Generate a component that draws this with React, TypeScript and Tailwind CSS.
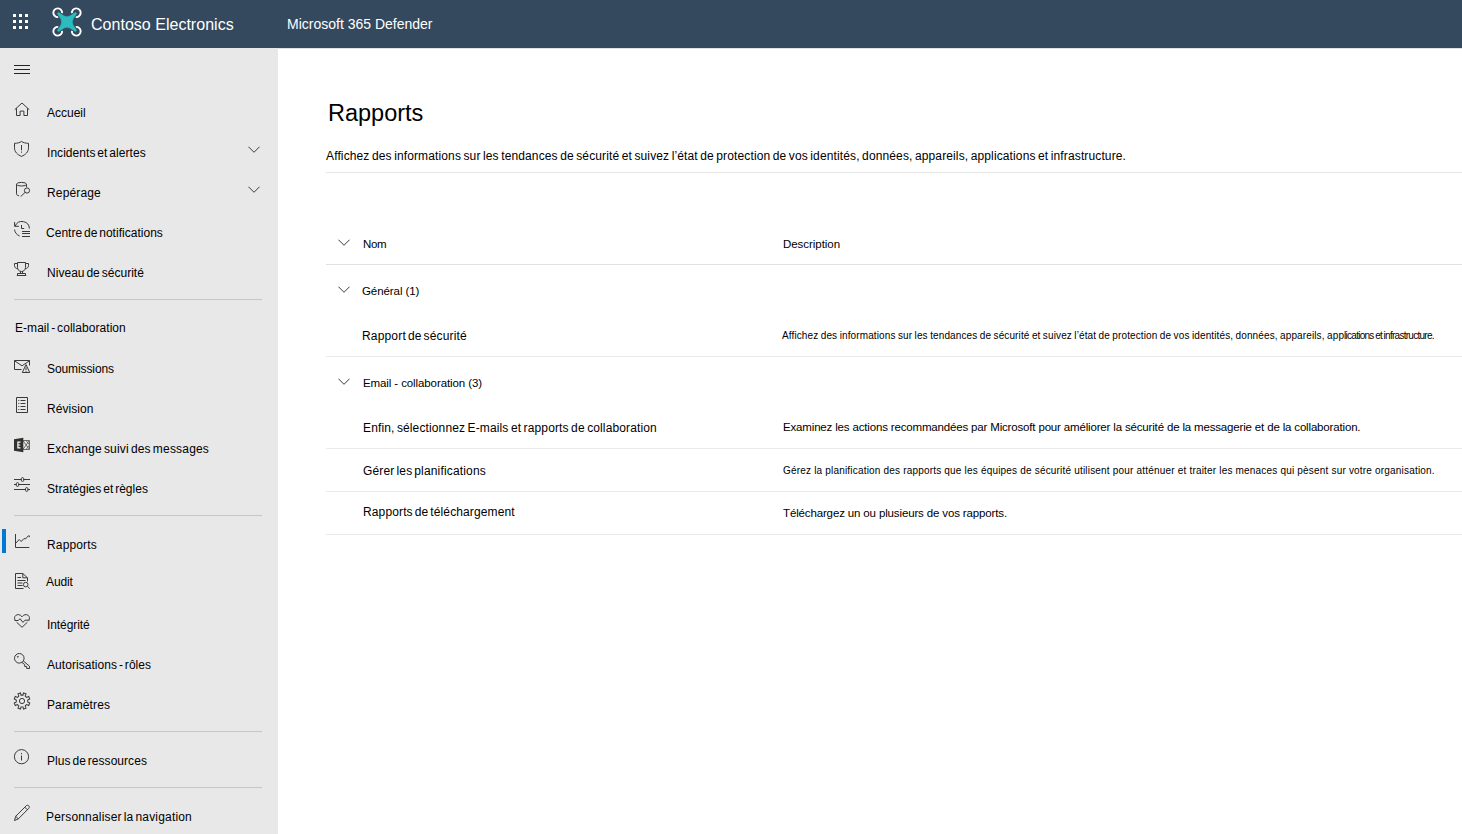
import type { ReactNode } from "react";

type IconProps = { children: ReactNode };

function Icon({ children }: IconProps) {
  return (
    <svg
      className="mt-[10px] h-[18px] w-[18px] shrink-0"
      viewBox="0 0 18 18"
      fill="none"
      stroke="#3b3a39"
      strokeWidth="1"
      aria-hidden="true"
    >
      {children}
    </svg>
  );
}

const icons = {
  home: (
    <Icon>
      <path d="M1.7 9.7 9 3l7.3 6.7M3.5 8.2v7.3h3.6v-4.4h3.8v4.4h3.6V8.2" />
    </Icon>
  ),
  shield: (
    <Icon>
      <path d="M8.5 1.4C6.6 2.8 4.2 3.3 1.5 3.3v4.5c0 4.2 2.9 6.8 7 8.6 4.1-1.8 7-4.4 7-8.6V3.3c-2.7 0-5.1-.5-7-1.9zM8.5 5v5.3M8.5 11.5v1.2" />
    </Icon>
  ),
  hunting: (
    <Icon>
      <ellipse cx="8.5" cy="4.2" rx="5" ry="1.8" />
      <path d="M3.5 4.2v9.6c0 1.2 1 1.7 2.6 2M13.5 4.2v3M12.1 12.4l-4.4 4.1" />
      <circle cx="14" cy="10.5" r="2.6" />
    </Icon>
  ),
  history: (
    <Icon>
      <path d="M1.6 2v4.3h4.3M2.2 6a7.400 7.400 0 0 1 14.200 2.600M8.500 5v3.500h2.700M9 11.500h8M9 13.500h8M9 16.500h8M1.600 9.600c.2 2.800 2 5.200 5 6.400" />
    </Icon>
  ),
  trophy: (
    <Icon>
      <path d="M4.5 2.5h8v5c0 2.2-1.6 4-4 4s-4-1.8-4-4zM4.5 3.5H1.500v2.100c0 1.900 1.500 3 3.300 3M12.500 3.500h3v2.100c0 1.900-1.500 3-3.300 3M7.500 11.400v2M9.500 11.400v2M4.500 15.500v-2h8v2zM3.800 15.500h9.400" />
    </Icon>
  ),
  submissions: (
    <Icon>
      <path d="M8.500 13.500h-7v-9h15v5M1.500 4.800l7.500 5 7.500-5M9.300 16.500h7.400L13 8.600zM13 11.300v2.800M13 14.800v1" />
    </Icon>
  ),
  review: (
    <Icon>
      <path d="M3.500 1.500h11v15h-11zM7.500 4.500h5M7.500 7.500h5M7.500 10.500h5M7.500 13.500h5M5.300 4.500h1M5.300 7.500h1M5.300 10.500h1M5.300 13.500h1" />
    </Icon>
  ),
  exchange: (
    <Icon>
      <path d="M10 4.500h6.500v9H10M10 4.700l6.300 8.600M16.300 4.700 10 13.300M13 4.500l3.500 4.400M13 13.500l3.500-4.400" stroke="#6b6967" />
      <path d="M1 3.300 10.300 1.700v14.600L1 14.700z" fill="#333130" stroke="none" />
      <path d="M7.500 6.200H4.900v5.600h2.600M4.900 9h2.400" stroke="#fff" strokeWidth="1.200" />
    </Icon>
  ),
  policies: (
    <Icon>
      <path d="M1 3.500h7.500M10.500 3.500H17M1 8.500h2.500M5.500 8.500H17M1 13.500h11.500M14.500 13.500H17" />
      <rect x="8.300" y="1.600" width="2.400" height="3.800" rx="1.100" />
      <rect x="3.300" y="6.600" width="2.400" height="3.800" rx="1.100" />
      <rect x="12.500" y="11.600" width="2.400" height="3.800" rx="1.100" />
    </Icon>
  ),
  reports: (
    <Icon>
      <path d="M2.500 2v13.500h13.800M2.700 11.300l3.500-3.800 2 2 2.800-3 1.400.5 3-3.200h.9v1.400" />
    </Icon>
  ),
  audit: (
    <Icon>
      <path d="M10.500 16.500h-8v-15h7.300l4.700 4.300v3.700M9.800 1.500v4.300h4.700M4.500 5.500h3.600M4.500 8.500h8M4.500 11h5M4.500 13.500h5" />
      <circle cx="12.700" cy="12.600" r="2.300" />
      <path d="m14.400 14.300 2.400 2.400" />
    </Icon>
  ),
  health: (
    <Icon>
      <path d="M2.100 8.300C1.200 6.500 1.400 4.500 2.800 3.400c1.900-1.500 4.500-.9 6.200 1.400 1.700-2.300 4.300-2.900 6.200-1.400 1.400 1.100 1.600 3.100.7 4.900M3.600 10.200 9 15.300l5.400-5.100M1.600 8.500h3.700L7 6.700l3 3.700 2-2.200h4.400" />
    </Icon>
  ),
  key: (
    <Icon>
      <circle cx="6.300" cy="6.300" r="4.800" />
      <circle cx="4.800" cy="4.800" r=".5" />
      <path d="m10.300 9 6.200 5.200v2.300h-2.800v-2h-2v-1.900l-3-2.400" />
    </Icon>
  ),
  settings: (
    <Icon>
      <path
        transform="translate(-1.260 -.750) scale(1.140)"
        strokeWidth=".88"
        d="m7.700 1.500.4 1.900h1.800l.4-1.900 2.200.8-.7 1.900 1.200 1.200 1.900-.8.9 2.200-1.800.9v1.700l1.800.9-.9 2.200-1.900-.8-1.200 1.200.7 1.900-2.200.8-.4-1.800H8.100l-.4 1.800-2.200-.8.700-1.900-1.200-1.200-1.900.8-.9-2.200L4 9.400V7.700l-1.800-.9.900-2.200 1.900.8 1.200-1.200-.7-1.900z"
      />
      <circle cx="9" cy="9" r="2.600" />
    </Icon>
  ),
  info: (
    <Icon>
      <circle cx="8.500" cy="8.700" r="7.100" />
      <path d="M8.500 7.500v5M8.500 5v1.200" />
    </Icon>
  ),
  edit: (
    <Icon>
      <path d="M1.500 16.500l1.200-4.200L13.300 1.700c.8-.7 1.800-.6 2.500.1s.7 1.700 0 2.500L5.300 14.900zM2.700 12.300l2.600 2.600M11.800 3.200l2.600 2.600" />
    </Icon>
  ),
};

type NavItem = {
  icon: ReactNode;
  label: string;
  text: string;
  expandable?: boolean;
  active?: boolean;
};

const primary: NavItem[] = [
  { icon: icons.home, label: "Accueil", text: "pt-[15px] pl-4" },
  { icon: icons.shield, label: "Incidents et alertes", text: "pt-[15px] pl-4 tracking-[0.05px] [word-spacing:-1.5px]", expandable: true },
  { icon: icons.hunting, label: "Repérage", text: "pt-[15px] pl-4 tracking-[0.15px]", expandable: true },
  { icon: icons.history, label: "Centre de notifications", text: "pt-[15px] pl-[15px] tracking-[0.02px] [word-spacing:-1.5px]" },
  { icon: icons.trophy, label: "Niveau de sécurité", text: "pt-[15px] pl-4 tracking-[0.03px] [word-spacing:-1.5px]" },
];

const email: NavItem[] = [
  { icon: icons.submissions, label: "Soumissions", text: "pt-[15px] pl-4 tracking-[-0.1px]" },
  { icon: icons.review, label: "Révision", text: "pt-[15px] pl-4 tracking-[0.06px]" },
  { icon: icons.exchange, label: "Exchange suivi des messages", text: "pt-[15px] pl-4 tracking-[0.19px] [word-spacing:-1.5px]" },
  { icon: icons.policies, label: "Stratégies et règles", text: "pt-[15px] pl-4 tracking-[0.03px] [word-spacing:-1.5px]" },
];

const manage: NavItem[] = [
  { icon: icons.reports, label: "Rapports", text: "pt-[15px] pl-4 tracking-[0.15px]", active: true },
  { icon: icons.audit, label: "Audit", text: "pt-3 pl-[15px] tracking-[-0.1px]" },
  { icon: icons.health, label: "Intégrité", text: "pt-[15px] pl-4 tracking-[-0.08px]" },
  { icon: icons.key, label: "Autorisations - rôles", text: "pt-[15px] pl-4 tracking-[0.05px] [word-spacing:-1.5px]" },
  { icon: icons.settings, label: "Paramètres", text: "pt-[15px] pl-4 tracking-[0.1px]" },
];

const resources: NavItem[] = [
  { icon: icons.info, label: "Plus de ressources", text: "pt-[15px] pl-4 tracking-[0.05px] [word-spacing:-1.5px]" },
];

const customize: NavItem[] = [
  { icon: icons.edit, label: "Personnaliser la navigation", text: "pt-[15px] pl-[15px] tracking-[0.18px] [word-spacing:-1.5px]" },
];

function Chevron({ className }: { className: string }) {
  return (
    <svg className={className} viewBox="0 0 12 8" fill="none" stroke="#3b3a39" strokeWidth="1" aria-hidden="true">
      <path d="M.4.700 6 6.300 11.600.700" />
    </svg>
  );
}

function NavGroup({ items }: { items: NavItem[] }) {
  return (
    <ul>
      {items.map((item) => (
        <li key={item.label} className="flex h-10 items-start pr-[18px]">
          <span className={item.active ? "mt-[7px] ml-0.5 mr-[7px] h-6 w-1 bg-[#0078d4]" : "w-[13px]"} />
          {item.icon}
          <span className={`grow leading-4 whitespace-nowrap ${item.text}`}>{item.label}</span>
          {item.expandable && <Chevron className="mt-4 h-2 w-3" />}
        </li>
      ))}
    </ul>
  );
}

function Divider() {
  return <div className="mr-4 ml-3.5 mt-[9px] mb-1.5 h-px shrink-0 bg-[#c8c6c4]" />;
}

function Logo() {
  return (
    <svg className="h-[30px] w-[30px]" viewBox="0 0 30 30" fill="none" aria-hidden="true">
      <g stroke="#fff" strokeWidth="1.900">
        <path d="M6.200 10.100A4.400 4.400 0 1 1 10.100 6.200" />
        <path d="M19.900 6.200A4.400 4.400 0 1 1 23.800 10.100" />
        <path d="M23.800 19.900A4.400 4.400 0 1 1 19.900 23.800" />
        <path d="M10.100 23.800A4.400 4.400 0 1 1 6.200 19.900" />
      </g>
      <path
        d="M5.400 6.600 6.600 5.400 12 9q3 1.500 6 0l5.400-3.600 1.200 1.200L21 12q-1.500 3 0 6l3.600 5.400-1.200 1.200L18 21q-3-1.500-6 0l-5.400 3.600-1.200-1.200L9 18q1.500-3 0-6z"
        fill="#2bbcc0"
        stroke="#2bbcc0"
        strokeWidth=".6"
      />
    </svg>
  );
}

function Waffle() {
  return (
    <div className="grid grid-cols-3 gap-[3px]">
      {[0, 1, 2, 3, 4, 5, 6, 7, 8].map((n) => (
        <span key={n} className="size-[3px] bg-white" />
      ))}
    </div>
  );
}

type Row = {
  name: string;
  nameClass: string;
  rowClass: string;
  description?: ReactNode;
  descriptionClass?: string;
  group?: boolean;
  chevron?: string;
};

const rows: Row[] = [
  {
    name: "Nom",
    nameClass: "pt-[19px] pl-px text-[11.5px] tracking-[-0.4px]",
    rowClass: "h-12 border-b border-[#e1e1e1]",
    description: "Description",
    descriptionClass: "pt-[19px] pl-px text-[11.5px] tracking-[-0.05px]",
    group: true,
    chevron: "mt-[22px]",
  },
  { name: "Général (1)", nameClass: "pt-[18px] text-[11.5px] tracking-[-0.08px]", rowClass: "h-[46px]", group: true, chevron: "mt-[21px]" },
  {
    name: "Rapport de sécurité",
    nameClass: "pt-[17px] text-xs tracking-[0.17px] [word-spacing:-1.5px]",
    rowClass: "h-[46px] border-b border-[#eaeaea]",
    description: (
      <>
        Affichez des informations sur les tendances de sécurité et suivez l’état de protection de vos identités, données, appareils, app
        <span className="tracking-[-0.73px]">lications et infrastructure.</span>
      </>
    ),
    descriptionClass: "pt-[17px] text-[10px] tracking-[0.12px] [word-spacing:-0.5px]",
  },
  { name: "Email - collaboration (3)", nameClass: "pt-[18px] pl-px text-[11.5px] tracking-[-0.1px]", rowClass: "h-[46px]", group: true, chevron: "mt-[21px]" },
  {
    name: "Enfin, sélectionnez E-mails et rapports de collaboration",
    nameClass: "pt-[17px] pl-px text-xs tracking-[0.125px] [word-spacing:-1px]",
    rowClass: "h-[46px] border-b border-[#eaeaea]",
    description:
      "Examinez les actions recommandées par Microsoft pour améliorer la sécurité de la messagerie et de la collaboration.",
    descriptionClass: "pt-4 pl-px text-[11.5px] tracking-[-0.165px]",
  },
  {
    name: "Gérer les planifications",
    nameClass: "pt-[14px] pl-px text-xs tracking-[0.16px] [word-spacing:-1.5px]",
    rowClass: "h-[43px] border-b border-[#eaeaea]",
    description:
      "Gérez la planification des rapports que les équipes de sécurité utilisent pour atténuer et traiter les menaces qui pèsent sur votre organisation.",
    descriptionClass: "pt-[14px] pl-px text-[10px] tracking-[0.19px]",
  },
  {
    name: "Rapports de téléchargement",
    nameClass: "pt-3 pl-px text-xs tracking-[0.13px] [word-spacing:-1.5px]",
    rowClass: "h-[43px] border-b border-[#eaeaea]",
    description: "Téléchargez un ou plusieurs de vos rapports.",
    descriptionClass: "pt-[13px] pl-px text-[11.5px] tracking-[-0.14px]",
  },
];

export default function App() {
  return (
    <div className="flex h-[834px] w-[1462px] flex-col overflow-hidden bg-white font-['Liberation_Sans',Arial,sans-serif] text-xs text-black">
      <header className="flex h-12 shrink-0 items-start bg-[#34495e] text-white">
        <div className="pt-3.5 pl-[13px]">
          <Waffle />
        </div>
        <div className="pt-[7px] pl-6">
          <Logo />
        </div>
        <div className="w-[205px] pt-[15px] pl-[9px] text-base leading-5 tracking-[0.02px]">Contoso Electronics</div>
        <div className="pt-3.5 text-sm leading-5">Microsoft 365 Defender</div>
      </header>
      <div className="flex min-h-0 grow">
        <nav className="flex w-[278px] shrink-0 flex-col overflow-hidden bg-[#e8e8e8]">
          <div className="flex h-[42px] shrink-0 flex-col gap-[3px] pt-[17px] pl-3.5">
            <span className="h-px w-4 bg-[#252423]" />
            <span className="h-px w-4 bg-[#252423]" />
            <span className="h-px w-4 bg-[#252423]" />
          </div>
          <NavGroup items={primary} />
          <Divider />
          <h2 className="h-10 shrink-0 pt-3.5 pl-[15px] leading-4 tracking-[0.05px] [word-spacing:-1.5px]">E-mail - collaboration</h2>
          <NavGroup items={email} />
          <Divider />
          <NavGroup items={manage} />
          <Divider />
          <NavGroup items={resources} />
          <Divider />
          <NavGroup items={customize} />
        </nav>
        <main className="min-w-0 grow border-t border-[#e1e1e1] pl-12">
          <h1 className="pt-12 pl-0.5 text-[23.5px] leading-8">Rapports</h1>
          <p className="border-b border-[#e6e6e6] pt-[19px] pb-2 leading-4 tracking-[0.127px] whitespace-nowrap [word-spacing:-1px]">
            Affichez des informations sur les tendances de sécurité et suivez l’état de protection de vos identités, données, appareils, applications et infrastructure.
          </p>
          <div className="mt-11">
            {rows.map((row) => (
              <div key={row.name} className={`grid grid-cols-[36px_420px_1fr] items-start leading-4 whitespace-nowrap ${row.rowClass}`}>
                <span className="pl-3">{row.group && <Chevron className={`h-2 w-3 ${row.chevron}`} />}</span>
                <span className={`leading-4 ${row.nameClass}`}>{row.name}</span>
                <span className={`leading-4 ${row.descriptionClass ?? ""}`}>{row.description}</span>
              </div>
            ))}
          </div>
        </main>
      </div>
    </div>
  );
}
